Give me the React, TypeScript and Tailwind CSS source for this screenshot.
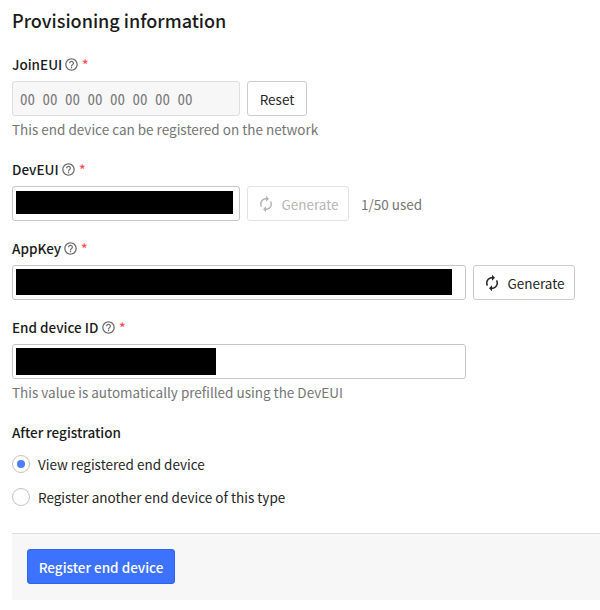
import type { ReactNode } from 'react'
import { MdAutorenew, MdHelpOutline } from 'react-icons/md'

function Label({ children, width }: { children: ReactNode; width: string }) {
  return (
    <div className="flex h-5 items-center font-medium text-[#1a1a1a]">
      <span className={`whitespace-nowrap ${width}`}>{children}</span>
      <MdHelpOutline className="ml-[2px] size-[15px] shrink-0 text-[#6b6b6b]" />
      <span className="ml-[3px] text-[#ff4d4d]">*</span>
    </div>
  )
}

function Redacted({ width, bar }: { width: string; bar: string }) {
  return (
    <div className={`h-[35px] rounded-[3px] border border-[#c6c6c6] bg-white ${width}`}>
      <div className={`bg-black ${bar}`} />
    </div>
  )
}

function Button({ children, className }: { children: ReactNode; className: string }) {
  return (
    <button className={`flex h-[35px] items-center justify-center whitespace-nowrap rounded-[3px] border bg-white ${className}`}>
      {children}
    </button>
  )
}

function Radio({ checked, children }: { checked?: boolean; children: ReactNode }) {
  return (
    <label className="flex h-5 items-center gap-2">
      <span className="flex size-[18px] shrink-0 items-center justify-center rounded-full border border-[#c2c2c2] bg-white">
        {checked && <span className="size-2 rounded-full bg-[#4a7dff]" />}
      </span>
      <span className="whitespace-nowrap">{children}</span>
    </label>
  )
}

export default function App() {
  return (
    <main className="h-[610px] w-[600px] overflow-hidden bg-white pl-3 pt-[10px] font-['Noto_Sans_CJK_SC',sans-serif] text-[13.5px] leading-5 text-[#262626]">
      <h1 className="h-5 whitespace-nowrap text-[18px] font-medium leading-5 text-[#1a1a1a]">Provisioning information</h1>

      <section className="mt-6">
        <Label width="w-[50px]">JoinEUI</Label>
        <div className="mt-[7px] flex gap-[7px]">
          <div className="flex h-[35px] w-[228px] items-center whitespace-pre rounded-[3px] border border-[#dedede] bg-[#f7f7f7] pl-[7px] font-['Noto_Sans_Mono_CJK_SC','Liberation_Mono',monospace] text-[15px] text-[#7a7a7a]">
            00 00 00 00 00 00 00 00
          </div>
          <Button className="w-[60px] border-[#cccccc]">Reset</Button>
        </div>
        <p className="mt-[3px] whitespace-nowrap text-[#757575]">This end device can be registered on the network</p>
      </section>

      <section className="mt-5">
        <Label width="w-[47px]">DevEUI</Label>
        <div className="mt-[7px] flex items-center gap-[7px]">
          <Redacted width="w-[228px]" bar="ml-[3px] mt-[4px] h-[23px] w-[217px]" />
          <Button className="w-[102px] gap-[6px] border-[#e2e2e2] text-[#b5b5b5]">
            <MdAutorenew className="size-[18px]" />
            Generate
          </Button>
          <span className="ml-[5px] text-[#757575]">1/50 used</span>
        </div>
      </section>

      <section className="mt-[17px]">
        <Label width="w-[49px]">AppKey</Label>
        <div className="mt-[7px] flex gap-[7px]">
          <Redacted width="w-[454px]" bar="ml-[3px] mt-[3px] h-[26px] w-[436px]" />
          <Button className="w-[102px] gap-[6px] border-[#cccccc]">
            <MdAutorenew className="size-[18px]" />
            Generate
          </Button>
        </div>
      </section>

      <section className="mt-[17px]">
        <Label width="w-[87px]">End device ID</Label>
        <div className="mt-[7px]">
          <Redacted width="w-[454px]" bar="ml-[3px] mt-[3px] h-[27px] w-[200px]" />
        </div>
        <p className="mt-[3px] whitespace-nowrap text-[#757575]">This value is automatically prefilled using the DevEUI</p>
      </section>

      <section className="mt-5">
        <h2 className="h-5 whitespace-nowrap font-medium text-[#1a1a1a]">After registration</h2>
        <div className="mt-3 flex flex-col gap-[13px]">
          <Radio checked>View registered end device</Radio>
          <Radio>Register another end device of this type</Radio>
        </div>
      </section>

      <footer className="mt-[26px] flex h-[67px] items-start border-t border-[#dedede] bg-[#f7f7f7] pl-[15px] pt-[15px]">
        <button className="h-[35px] w-[148px] whitespace-nowrap rounded-[3px] border border-[#2f63f5] bg-[#3d72ff] font-medium text-white">
          Register end device
        </button>
      </footer>
    </main>
  )
}
